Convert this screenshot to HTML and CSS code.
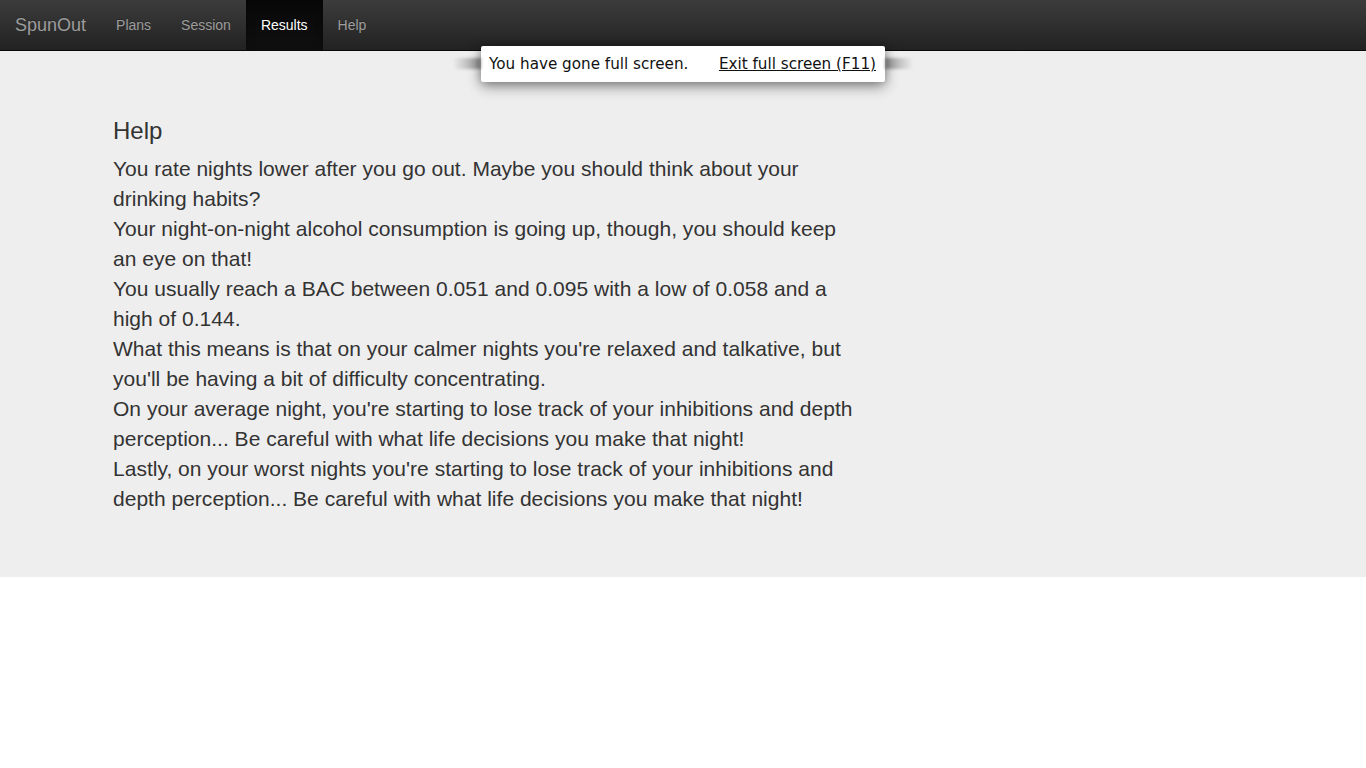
FILE: index.html
```html
<!DOCTYPE html>
<html>
<head>
<meta charset="utf-8">
<title>SpunOut</title>
<link rel="stylesheet" href="styles.css">
</head>
<body>
<nav class="navbar">
  <a class="brand" href="#">SpunOut</a>
  <ul class="nav">
    <li><a href="#">Plans</a></li>
    <li><a href="#">Session</a></li>
    <li class="active"><a href="#">Results</a></li>
    <li><a href="#">Help</a></li>
  </ul>
</nav>
<div class="jumbotron">
  <div class="container">
    <div class="col">
      <h3>Help</h3>
      <p>You rate nights lower after you go out. Maybe you should think about your drinking habits?<br>Your night-on-night alcohol consumption is going up, though, you should keep an eye on that!<br>You usually reach a BAC between 0.051 and 0.095 with a low of 0.058 and a high of 0.144.<br>What this means is that on your calmer nights you're relaxed and talkative, but you'll be having a bit of difficulty concentrating.<br>On your average night, you're starting to lose track of your inhibitions and depth perception... Be careful with what life decisions you make that night!<br>Lastly, on your worst nights you're starting to lose track of your inhibitions and depth perception... Be careful with what life decisions you make that night!</p>
    </div>
  </div>
</div>
<div class="fs-bubble">
  <span>You have gone full screen.</span>
  <a href="#">Exit full screen (F11)</a>
</div>
</body>
</html>
```
FILE: styles.css
```css
html, body { margin: 0; padding: 0; }
body {
  font-family: "Liberation Sans", Arial, sans-serif;
  font-size: 14px;
  line-height: 1.42857;
  color: #333;
  background: #fff;
}
.navbar {
  display: flex;
  height: 50px;
  background: linear-gradient(to bottom, #3c3c3c 0, #222 100%);
  border-bottom: 1px solid #080808;
}
.brand {
  display: block;
  padding: 15px;
  font-size: 18px;
  line-height: 20px;
  color: #9d9d9d;
  text-decoration: none;
  text-shadow: 0 -1px 0 rgba(0,0,0,.25);
}
.nav { display: flex; list-style: none; margin: 0; padding: 0; }
.nav a {
  display: block;
  padding: 15px;
  line-height: 20px;
  color: #9d9d9d;
  text-decoration: none;
  text-shadow: 0 -1px 0 rgba(0,0,0,.25);
}
.nav .active a {
  color: #fff;
  background: linear-gradient(to bottom, #080808 0, #0f0f0f 100%);
  box-shadow: inset 0 3px 9px rgba(0,0,0,.25);
}
.jumbotron {
  background: #eee;
  padding: 48px 0 48px;
}
.container { width: 1170px; margin: 0 auto; }
.col { width: 750px; padding: 0 15px; }
h3 {
  margin: 19px 0 10px;
  font-size: 24px;
  font-weight: 500;
  line-height: 26px;
  color: #333;
}
p {
  margin: 0 0 15px;
  font-size: 21px;
  font-weight: 200;
  line-height: 30px;
  letter-spacing: 0.015px;
  color: #333;
}
.fs-bubble {
  position: absolute;
  left: 481px;
  top: 46px;
  width: 404px;
  height: 36px;
  box-sizing: border-box;
  padding: 2px 8px 0;
  display: flex;
  align-items: center;
  justify-content: space-between;
  background: #fff;
  border-radius: 2px;
  box-shadow: 0 4px 14px rgba(0,0,0,.45), 0 0 8px rgba(0,0,0,.2);
  font-family: "DejaVu Sans", sans-serif;
  font-size: 15.2px;
  color: #111;
}
.fs-bubble::before {
  content: "";
  position: absolute;
  left: -28px;
  right: -28px;
  top: 12px;
  height: 11px;
  background: linear-gradient(to right, rgba(0,0,0,0) 0, rgba(0,0,0,.38) 28px, rgba(0,0,0,0) 28px, rgba(0,0,0,0) calc(100% - 28px), rgba(0,0,0,.38) calc(100% - 28px), rgba(0,0,0,0) 100%);
  filter: blur(1.5px);
  pointer-events: none;
}
.fs-bubble a { color: #111; text-decoration: underline; margin-right: 1px; }
```
